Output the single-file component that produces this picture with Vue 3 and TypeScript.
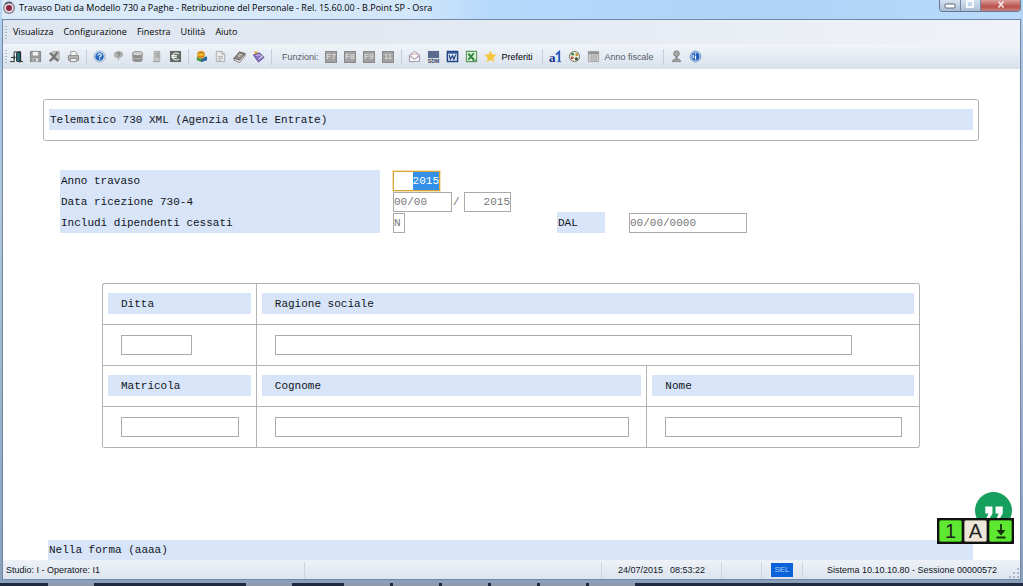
<script setup lang="ts">
import { ref, onMounted } from 'vue'

interface Tool {
  id: string
  label: string
}

const menus: string[] = ['Visualizza', 'Configurazione', 'Finestra', 'Utilità', 'Aiuto']

const fileTools: Tool[] = [
  { id: 'door', label: 'Esci' },
  { id: 'save', label: 'Salva' },
  { id: 'delete', label: 'Elimina' },
  { id: 'print', label: 'Stampa' },
]
const helpTools: Tool[] = [
  { id: 'help', label: 'Guida' },
  { id: 'hint', label: 'Suggerimento' },
  { id: 'archive', label: 'Archivio' },
  { id: 'server', label: 'Server' },
  { id: 'euro', label: 'Contabilità' },
]
const bookTools: Tool[] = [
  { id: 'globe', label: 'Collegamenti' },
  { id: 'page', label: 'Documento' },
  { id: 'book', label: 'Manuale' },
  { id: 'tag', label: 'Etichetta' },
]
const functionKeys: string[] = ['F7', 'F8', 'F9', '11']
const officeTools: Tool[] = [
  { id: 'mail', label: 'Posta' },
  { id: 'sdm', label: 'SDM' },
  { id: 'word', label: 'Word' },
  { id: 'excel', label: 'Excel' },
]

const year = ref('2015')
const receivedDay = ref('00/00')
const receivedYear = ref('2015')
const includeEnded = ref('N')
const fromDate = ref('00/00/0000')
const company = ref('')
const companyName = ref('')
const badge = ref('')
const surname = ref('')
const firstName = ref('')

const yearInput = ref<HTMLInputElement | null>(null)
onMounted(() => {
  yearInput.value?.focus()
  yearInput.value?.select()
})
</script>

<template>
  <div class="desktop">
    <div class="window">
      <header class="titlebar">
        <svg class="app-icon" viewBox="0 0 14 14" aria-hidden="true">
          <circle cx="7" cy="7" r="6" fill="#8d8492" />
          <circle cx="7" cy="7" r="4.6" fill="#e9dfe6" />
          <circle cx="7" cy="7" r="3" fill="#8d2540" />
          <path d="M3 3a6 6 0 0 1 7-1" stroke="#57525f" stroke-width="1.4" fill="none" />
        </svg>
        <h1>Travaso Dati da Modello 730 a Paghe - Retribuzione del Personale - Rel. 15.60.00 - B.Point SP - Osra</h1>
        <div class="controls">
          <button type="button" aria-label="Riduci a icona">
            <svg viewBox="0 0 12 10"><rect x="1" y="4" width="10" height="4" rx="1" fill="#fff" stroke="#59697d" /></svg>
          </button>
          <button type="button" aria-label="Ingrandisci">
            <svg viewBox="0 0 12 10"><rect x="3" y="1" width="6" height="6" fill="none" stroke="#f4f8fd" stroke-width="2" /></svg>
          </button>
          <button type="button" class="close" aria-label="Chiudi">
            <svg viewBox="0 0 12 10"><path d="M3.500 1.500l5 6m0-6l-5 6" stroke="#f7e4e4" stroke-width="1.6" /></svg>
          </button>
        </div>
      </header>

      <div class="frame">
        <nav class="menubar" aria-label="Menu principale">
          <span class="grip"></span>
          <button v-for="menu in menus" :key="menu" type="button">{{ menu }}</button>
        </nav>

        <div class="toolbar" role="toolbar" aria-label="Strumenti">
          <span class="grip"></span>
          <button v-for="tool in fileTools" :key="tool.id" type="button" class="tool" :aria-label="tool.label">
            <svg viewBox="0 0 14 14">
              <template v-if="tool.id === 'door'">
                <path d="M4.500 12V2h7v10" fill="#f7fafc" stroke="#222" />
                <path d="M7 3l4-1v11l-4-1z" fill="#27707a" stroke="#111" stroke-width=".8" />
                <path d="M0 12.500h5M11 12.500h3M1 8h4M4 6.500L5.800 8 4 9.500" stroke="#222" fill="none" />
              </template>
              <template v-else-if="tool.id === 'save'">
                <path d="M1.500 1.500h11v11h-11z" fill="#999" stroke="#818181" />
                <path d="M4 2h6v4H4z" fill="#f1f1f1" />
                <path d="M4 9h6v3.500H4z" fill="#ddd" />
                <path d="M5 9.500h2v2.500H5z" fill="#777" />
              </template>
              <template v-else-if="tool.id === 'delete'">
                <path d="M5 1.500h7v9H5z" fill="#c7c7c7" stroke="#aaa" />
                <path d="M2 3l9 9M10.500 2.500L2 12" stroke="#777" stroke-width="2.400" />
              </template>
              <template v-else>
                <path d="M4 6V1.500h5l1.500 1.500v3" fill="#f2f2f2" stroke="#999" />
                <path d="M1.500 6h11v5h-11z" fill="#b5b5b5" stroke="#888" />
                <path d="M3.500 9h7v3.500h-7z" fill="#eee" stroke="#888" />
              </template>
            </svg>
          </button>
          <span class="sep"></span>
          <button v-for="tool in helpTools" :key="tool.id" type="button" class="tool" :aria-label="tool.label">
            <svg viewBox="0 0 14 14">
              <template v-if="tool.id === 'help'">
                <circle cx="7" cy="7" r="6" fill="#dfe9f6" stroke="#90a9cd" />
                <circle cx="7" cy="7" r="4.600" fill="#2467bf" />
                <path d="M5.300 5.800c0-2.400 3.500-2.200 3.500-.2 0 1.300-1.700 1.200-1.700 2.400M7.100 9v1.300" stroke="#fff" stroke-width="1.300" fill="none" />
              </template>
              <template v-else-if="tool.id === 'hint'">
                <path d="M2 5c0-5 10-5 10-.5C12 8 9 8 8 9l-1 3-1-3C3 8.500 2 7 2 5z" fill="#b3b3b3" />
                <path d="M5.500 4.500c0-2 3.200-2 3.200 0 0 1.200-1.600 1-1.600 2.500" stroke="#666" fill="none" />
              </template>
              <template v-else-if="tool.id === 'archive'">
                <path d="M1.500 4v7c0 2.500 11 2.500 11 0V4z" fill="#8e8e8e" />
                <path d="M1.500 8c0 2 11 2 11 0" fill="none" stroke="#bbb" />
                <ellipse cx="7" cy="4" rx="5.500" ry="2.300" fill="#d2d2d2" stroke="#838383" />
              </template>
              <template v-else-if="tool.id === 'server'">
                <path d="M4.500 1.500h6v11h-6z" fill="#c9c9c9" stroke="#aaa" />
                <path d="M6 3.500h4M6 5.500h4M6 7.500h4" stroke="#8d8d8d" />
                <path d="M3 12.500h6" stroke="#999" />
              </template>
              <template v-else>
                <path d="M1 1h12v12H1z" fill="#666c68" />
                <path d="M10.500 4.200C6.500 1.800 4 4 4 7s3 5 6.500 2.800M2.500 6h6M2.500 8h6" stroke="#f1f1ed" stroke-width="1.200" fill="none" />
              </template>
            </svg>
          </button>
          <span class="sep"></span>
          <button v-for="tool in bookTools" :key="tool.id" type="button" class="tool" :aria-label="tool.label">
            <svg viewBox="0 0 14 14">
              <template v-if="tool.id === 'globe'">
                <path d="M2 7v4l5 2 5-2V8z" fill="#3f9a43" />
                <path d="M6 8l7-1v4l-6 2z" fill="#2b64a3" />
                <circle cx="6.500" cy="5" r="4.300" fill="#e9b42f" />
                <path d="M3 4c2-2 5-2 7 0M3 7c2 1 5 1 7-1" stroke="#b05b22" fill="none" />
              </template>
              <template v-else-if="tool.id === 'page'">
                <path d="M2.500 1.500h6l3 3v8h-9z" fill="#e9e9e9" stroke="#aaa" />
                <path d="M8.500 1.500v3h3M4.500 7h5M4.500 9h5M4.500 11h3" stroke="#aaa" fill="none" />
              </template>
              <template v-else-if="tool.id === 'book'">
                <path d="M1 9l6-7 6 2-6 7z" fill="#918c86" stroke="#5d5751" />
                <path d="M1 9v2l6 2.500 6-7V4l-6 7z" fill="#eee" stroke="#625b55" stroke-width=".8" />
                <path d="M5 6l3 1M6.500 4.500l3 1" stroke="#ddd" />
              </template>
              <template v-else>
                <path d="M2 2l3-1 2 3-3 2z" fill="#e4b241" />
                <path d="M1.500 5.500L8 3l5 5-6 5z" fill="#8b77c4" stroke="#5d4a93" />
                <path d="M4 6l4-1 3 3" stroke="#d8ccf0" fill="none" />
                <path d="M7 10l5-4" stroke="#dce6ef" />
              </template>
            </svg>
          </button>
          <span class="sep"></span>
          <span class="caption">Funzioni:</span>
          <button v-for="key in functionKeys" :key="key" type="button" class="tool">
            <span class="fkey">{{ key }}</span>
          </button>
          <span class="sep"></span>
          <button v-for="tool in officeTools" :key="tool.id" type="button" class="tool" :aria-label="tool.label">
            <svg viewBox="0 0 14 14">
              <template v-if="tool.id === 'mail'">
                <path d="M1.500 5.500L7 1.500l5.500 4v7h-11z" fill="#f7f2f5" stroke="#9c91a8" />
                <path d="M3.500 4.500h7v3l-3.500 2-3.500-2z" fill="#fff" stroke="#d59a9a" stroke-width=".8" />
                <path d="M1.500 6l5.500 4 5.500-4" fill="none" stroke="#9c91a8" />
              </template>
              <template v-else-if="tool.id === 'sdm'">
                <path d="M1 1h12v8H1z" fill="#5a6a8c" />
                <path d="M1 9h12v4H1z" fill="#e7eaf0" />
                <text x="7" y="13.500" text-anchor="middle" font-size="5.500" font-weight="bold" fill="#303a52">SDM</text>
              </template>
              <template v-else-if="tool.id === 'word'">
                <path d="M1.500 1.500h11v11h-11z" fill="#dfe8f6" stroke="#24467f" stroke-width="1.600" />
                <path d="M2 2h10v2H2z" fill="#315b9f" />
                <path d="M3.500 5.500l1.300 4.500L7 6l1.500 4 2-5" stroke="#1c3f82" stroke-width="1.300" fill="none" />
              </template>
              <template v-else>
                <path d="M1.500 1.500h11v11h-11z" fill="#d9eed6" stroke="#5a9a5c" stroke-width="1.200" />
                <path d="M3.500 4l6 6.500M9.500 3.500l-6 7" stroke="#27843a" stroke-width="2" />
                <path d="M8 11h4" stroke="#27843a" />
              </template>
            </svg>
          </button>
          <button type="button" class="tool wide strong">
            <svg viewBox="0 0 14 14">
              <path d="M7 .8l1.900 4 4.300.5-3.200 3 .9 4.500L7 10.500l-3.900 2.300.9-4.500-3.200-3 4.300-.5z" fill="#f7c63c" stroke="#f3d67d" stroke-width=".6" />
            </svg>
            Preferiti
          </button>
          <span class="sep gap"></span>
          <button type="button" class="tool" aria-label="Carattere">
            <svg viewBox="0 0 14 14">
              <text x="0" y="12.500" font-size="14" font-weight="bold" font-family="Liberation Serif, serif" fill="#16328f">a</text>
              <path d="M7.500 5L11 2v10.500" fill="none" stroke="#2456bd" stroke-width="2" />
              <path d="M9 12.500h4" stroke="#2456bd" />
            </svg>
          </button>
          <button type="button" class="tool" aria-label="Colori">
            <svg viewBox="0 0 14 14">
              <circle cx="7" cy="7" r="5.500" fill="#eee9d6" stroke="#6d6f5e" />
              <circle cx="5" cy="4.500" r="1.500" fill="#3a8a48" />
              <circle cx="9.500" cy="5" r="1.500" fill="#c8902e" />
              <circle cx="4.500" cy="8.500" r="1.500" fill="#b5493d" />
              <circle cx="9" cy="9.500" r="1.700" fill="#354a3e" />
            </svg>
          </button>
          <button type="button" class="tool wide">
            <svg viewBox="0 0 14 14">
              <path d="M1.500 1.500h11v11h-11z" fill="#d3d3d3" stroke="#a2a2a2" />
              <path d="M1.500 2h11v2.500h-11z" fill="#8f8f8f" />
              <path d="M3 6.500h8M3 8.500h8M3 10.500h8M5 5v7M7.500 5v7M10 5v7" stroke="#aaa" stroke-width=".8" />
            </svg>
            Anno fiscale
          </button>
          <span class="sep gap"></span>
          <button type="button" class="tool" aria-label="Utente">
            <svg viewBox="0 0 14 14">
              <circle cx="7" cy="4" r="3" fill="#aaa" stroke="#777" />
              <path d="M6 7h2v2.500H6z" fill="#777" />
              <path d="M2.500 12.500c0-4 9-4 9 0z" fill="#a3a3a3" stroke="#858585" />
            </svg>
          </button>
          <button type="button" class="tool" aria-label="Informazioni">
            <svg viewBox="0 0 14 14">
              <circle cx="7" cy="7" r="5.800" fill="#c6d9f4" stroke="#7094c9" />
              <circle cx="7" cy="7" r="4.300" fill="#1f5fb9" />
              <path d="M7 3.500v1.300M7 6v4.300M4.500 5v4" stroke="#fff" stroke-width="1.300" />
            </svg>
          </button>
        </div>

        <main class="page">
          <section class="heading">
            <h2 class="band">Telematico 730 XML (Agenzia delle Entrate)</h2>
          </section>

          <form class="params" @submit.prevent>
            <div class="param">
              <label for="year">Anno travaso</label>
              <div class="fields">
                <input id="year" ref="yearInput" v-model="year" class="w-year right active" />
              </div>
            </div>
            <div class="param">
              <label for="received">Data ricezione 730-4</label>
              <div class="fields">
                <input id="received" v-model="receivedDay" class="w-day" />
                <span class="slash">/</span>
                <input v-model="receivedYear" class="w-year right" aria-label="Anno ricezione 730-4" />
              </div>
            </div>
            <div class="param">
              <label for="ended">Includi dipendenti cessati</label>
              <div class="fields">
                <input id="ended" v-model="includeEnded" class="w-flag" />
              </div>
              <label for="from" class="from">DAL</label>
              <input id="from" v-model="fromDate" class="w-date" />
            </div>
          </form>

          <section class="sheet">
            <div class="cell"><label class="band" for="company">Ditta</label></div>
            <div class="cell span"><label class="band" for="company-name">Ragione sociale</label></div>
            <div class="cell entry"><input id="company" v-model="company" class="w-code" /></div>
            <div class="cell entry span"><input id="company-name" v-model="companyName" class="w-name" /></div>
            <div class="cell"><label class="band" for="badge">Matricola</label></div>
            <div class="cell"><label class="band" for="surname">Cognome</label></div>
            <div class="cell"><label class="band" for="first-name">Nome</label></div>
            <div class="cell entry"><input id="badge" v-model="badge" /></div>
            <div class="cell entry"><input id="surname" v-model="surname" /></div>
            <div class="cell entry"><input id="first-name" v-model="firstName" /></div>
          </section>

          <p class="band message">Nella forma (aaaa)</p>

          <div class="floating">
            <div class="quote">
              <svg viewBox="0 0 36 36" aria-hidden="true">
                <circle cx="18" cy="18" r="18" fill="#17a05d" />
                <path d="M10 14h7v7l-3 5h-3l2-5h-3zM20 14h7v7l-3 5h-3l2-5h-3z" fill="#fff" />
              </svg>
            </div>
            <div class="locks">
              <span class="lock on">1</span>
              <span class="lock">A</span>
              <span class="lock on">
                <svg viewBox="0 0 14 18" aria-hidden="true">
                  <path d="M7 2v10M2.500 15.500h9" stroke="#17310c" stroke-width="1.800" />
                  <path d="M2.500 8h9L7 13.500z" fill="#17310c" />
                </svg>
              </span>
            </div>
          </div>
        </main>

        <footer class="status">
          <span class="operator">Studio: I - Operatore: I1</span>
          <span class="spacer"></span>
          <span class="clock"><time>24/07/2015</time><time>08:53:22</time></span>
          <span class="blank"></span>
          <span class="mode"><b>SEL</b></span>
          <span class="session">Sistema 10.10.10.80 - Sessione 00000572</span>
          <svg class="resize" viewBox="0 0 10 10" aria-hidden="true">
            <path d="M8 0h2v2H8zM8 4h2v2H8zM4 4h2v2H4zM8 8h2v2H8zM4 8h2v2H4zM0 8h2v2H0z" fill="#a9b8cb" />
          </svg>
        </footer>
      </div>
    </div>
    <div class="taskbar">
      <i class="task first"></i><i class="task second"></i><i class="task"></i><i class="task"></i>
      <i class="task"></i><i class="task"></i><i class="task"></i><i class="task"></i>
    </div>
  </div>
</template>

<style>
body {
  margin: 0;
}
</style>

<style scoped>
* {
  box-sizing: border-box;
}
button,
input {
  margin: 0;
  padding: 0;
  font: inherit;
  color: inherit;
  border: 0;
  border-radius: 0;
  background: none;
  outline: 0;
}
svg {
  display: block;
}
.desktop {
  display: flex;
  flex-direction: column;
  min-height: 100vh;
  background: #26344f;
  font-family: "Liberation Sans", Arial, sans-serif;
  font-size: 9px;
  color: #10151d;
}
.window {
  flex: 1;
  display: flex;
  flex-direction: column;
  padding: 0 2px 3px;
  background: linear-gradient(#b9d8f6, #a9c3df 60px, #b3c6dc 200px, #8a9fb9);
}
.titlebar {
  display: flex;
  align-items: flex-start;
  height: 19px;
  gap: 3px;
  background: linear-gradient(90deg, #dcebf9, #d3e7fa 40%, #b5d8fb 48%, #aed3f7 75%, #b9dafa);
}
.app-icon {
  width: 14px;
  height: 14px;
  margin-top: 1px;
}
h1 {
  flex: 1;
  margin: 0;
  font: 9px/16px "Open Sans", sans-serif;
  color: #000;
  white-space: nowrap;
}
.controls {
  display: flex;
  width: 82px;
  height: 12px;
  border: 1px solid #64778e;
  border-top: 0;
  border-radius: 0 0 4px 4px;
  overflow: hidden;
}
.controls button {
  flex: 1;
  display: flex;
  justify-content: center;
  background: linear-gradient(#d5e2f0, #a9bfd6);
  border-right: 1px solid #7488a0;
}
.controls svg {
  width: 12px;
  height: 10px;
}
.controls .close {
  flex: 2;
  border-right: 0;
  background: linear-gradient(#dba09b, #b9514a 60%, #c8837f);
}
.frame {
  flex: 1;
  display: flex;
  flex-direction: column;
  border: 1px solid #6f87a8;
  background: #fff;
}
.menubar {
  display: flex;
  align-items: center;
  height: 24px;
  gap: 10px;
  background: linear-gradient(90deg, #dfe6f0, #e4eaf2 50%, #f0f2f9);
  font: 9px/16px "Open Sans", sans-serif;
  color: #000;
}
.grip {
  width: 2px;
  height: 13px;
  margin-left: 2px;
  background: repeating-linear-gradient(#a9b7c9 0 1px, transparent 1px 3px);
}
.menubar .grip {
  margin-right: -4px;
}
.toolbar {
  display: flex;
  align-items: center;
  height: 25px;
  background: linear-gradient(#f1f5fa, #e5ebf3 50%, #d9e1eb);
  white-space: nowrap;
}
.tool {
  display: flex;
  align-items: center;
  justify-content: center;
  width: 19px;
  height: 20px;
}
.tool svg {
  width: 13px;
  height: 13px;
}
.tool.wide {
  width: auto;
  padding-left: 3px;
  gap: 5px;
  color: #555a63;
}
.tool.strong {
  color: #000;
}
.sep {
  width: 1px;
  height: 16px;
  margin: 0 3px;
  background: #c3ccd9;
}
.sep.gap {
  margin-left: 9px;
}
.caption {
  padding: 0 3px 0 7px;
  color: #555a63;
}
.fkey {
  width: 12px;
  height: 12px;
  border: 1px solid #8a8a8a;
  background: #a2a2a2;
  color: #e8e8e8;
  font-size: 8px;
  line-height: 10px;
  text-align: center;
}
.page {
  position: relative;
  flex: 1;
  display: flex;
  flex-direction: column;
  padding: 30px 41px 0 40px;
  font-family: "Liberation Mono", "Courier New", monospace;
  font-size: 11px;
  line-height: 20px;
}
.band {
  display: block;
  margin: 0;
  padding-top: 1px;
  background: #d8e4f7;
  font-size: 11px;
  font-weight: 400;
}
.heading {
  padding: 9px 5px 10px;
  border: 1px solid #b3b3b3;
  border-radius: 3px;
}
.heading .band {
  padding-left: 1px;
}
.params {
  margin: 29px 0 0 17px;
}
.param {
  display: flex;
  align-items: flex-end;
  height: 21px;
}
.param label {
  width: 320px;
  padding: 1px 0 0 1px;
  background: #d8e4f7;
}
.param .from {
  width: 48px;
}
.fields {
  display: flex;
  align-items: center;
  width: 164px;
  margin-left: 13px;
}
input {
  height: 20px;
  border: 1px solid #aaa;
  background: #fff;
  color: #777;
}
.right {
  text-align: right;
}
.active {
  border: 1px solid #d9a534;
  outline: 1px solid #f5e3b8;
}
.active::selection {
  background: #3390e8;
  color: #fff;
}
.w-year {
  width: 47px;
}
.w-day {
  width: 59px;
}
.w-flag {
  width: 12px;
}
.w-date {
  width: 118px;
  margin-left: 24px;
}
.slash {
  width: 12px;
  padding-left: 1px;
  color: #777;
}
.sheet {
  display: grid;
  grid-template-columns: 154fr 391fr 273fr;
  grid-auto-rows: 41px;
  margin: 50px 59px 20px;
  border: 1px solid #b3b3b3;
  border-width: 0 1px 1px 0;
  border-radius: 3px;
}
.cell {
  padding: 9px 5px 10px;
  border: 1px solid #b3b3b3;
  border-width: 1px 0 0 1px;
}
.cell:first-child {
  border-top-left-radius: 3px;
}
.cell .band {
  padding-left: 13px;
}
.span {
  grid-column: span 2;
}
.entry {
  padding: 10px 17px 10px 18px;
}
.entry input {
  display: block;
  width: 100%;
}
.entry .w-code {
  width: 60%;
}
.entry .w-name {
  width: 92%;
}
.message {
  margin: auto 6px 0 5px;
  padding: 0 0 0 1px;
}
.floating {
  position: absolute;
  right: 6px;
  bottom: 16px;
  display: flex;
  flex-direction: column;
  align-items: flex-end;
}
.quote {
  width: 37px;
  height: 26px;
  margin-right: 2px;
}
.quote svg {
  width: 37px;
  height: 37px;
}
.locks {
  position: relative;
  display: flex;
  gap: 2px;
  padding: 1px;
  border: 1px solid #111;
  background: #111;
}
.lock {
  display: flex;
  align-items: center;
  justify-content: center;
  width: 23px;
  height: 22px;
  border: 1px solid #9c9484;
  border-radius: 2px;
  background: #eee6d8;
  font: 20px/22px "Liberation Sans", Arial, sans-serif;
  color: #222;
}
.lock.on {
  border-color: #3aa51d;
  background: #5fe832;
}
.lock svg {
  width: 14px;
  height: 18px;
}
.status {
  display: flex;
  align-items: center;
  height: 19px;
  background: linear-gradient(#eef2f8, #dde4ee);
  white-space: nowrap;
}
.operator {
  width: 301px;
  padding-left: 3px;
}
.status > .spacer,
.clock,
.blank,
.mode,
.session {
  display: flex;
  align-items: center;
  height: 16px;
  border-left: 1px solid #ccd5e1;
}
.spacer {
  flex: 1;
}
.clock {
  width: 120px;
  justify-content: center;
  gap: 7px;
}
.blank {
  width: 40px;
}
.mode {
  width: 41px;
  justify-content: center;
}
.mode b {
  width: 22px;
  height: 14px;
  background: #0b61d8;
  color: #a9cdf7;
  font: 8px/14px "Liberation Sans", Arial, sans-serif;
  text-align: center;
}
.session {
  width: 207px;
  padding-left: 24px;
}
.resize {
  width: 10px;
  height: 10px;
  align-self: flex-end;
  margin: 0 1px 1px 0;
}
.taskbar {
  display: flex;
  gap: 3px;
  height: 3px;
  padding-left: 48px;
  background: #1c2940;
}
.task {
  width: 46px;
  background: #8f9aac;
}
.task.first {
  margin-right: 149px;
}
.task.second {
  margin-right: 49px;
}
</style>
